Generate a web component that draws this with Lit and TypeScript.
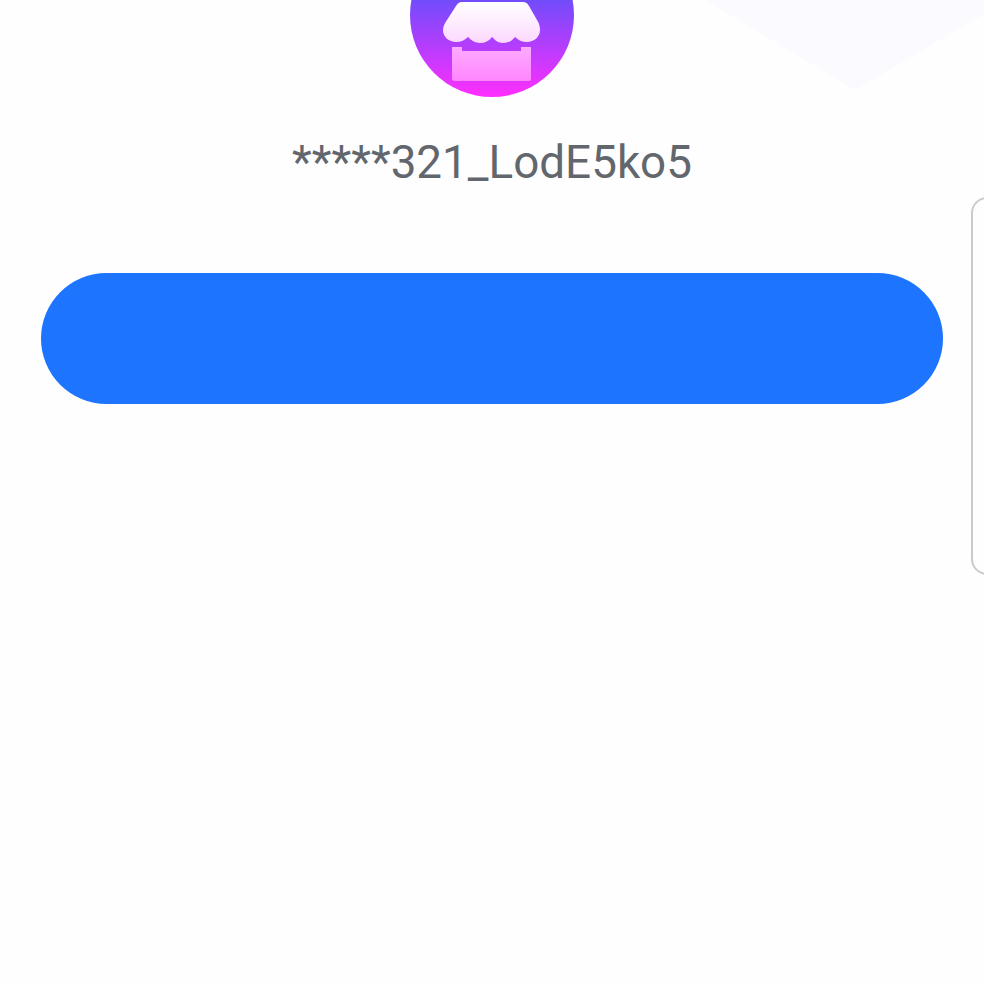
import { LitElement, html, css } from "lit";
import { customElement } from "lit/decorators.js";

@customElement("app-root")
export class AppRoot extends LitElement {
  static styles = css`
    :host {
      display: block;
      position: relative;
      width: 984px;
      height: 984px;
      overflow: hidden;
      background: #fefefe;
      font-family: Roboto, "Liberation Sans", sans-serif;
    }
    .backdrop {
      position: absolute;
      top: 0;
      right: 0;
      width: 284px;
      height: 92px;
    }
    .handle {
      position: absolute;
      left: 971px;
      top: 197px;
      width: 40px;
      height: 378px;
      box-sizing: border-box;
      border: 2px solid #cbcbcd;
      border-radius: 16px;
      background: #fefefe;
    }
    .content {
      position: relative;
      display: flex;
      flex-direction: column;
      align-items: center;
      padding: 0 41px;
    }
    .avatar {
      display: block;
      width: 164px;
      height: 164px;
      margin-top: -67px;
    }
    .name {
      margin-top: 39px;
      font-size: 45.8px;
      line-height: 54px;
      color: #62666d;
      white-space: nowrap;
    }
    .action {
      align-self: stretch;
      height: 131px;
      margin-top: 83px;
      padding: 0;
      border: 0;
      border-radius: 66px;
      background: #1c74ff;
    }
  `;

  render() {
    return html`
      <svg class="backdrop" viewBox="0 0 284 92" aria-hidden="true">
        <path d="M5 0 L155 90 L284 14 V0 Z" fill="#fbfbff" />
      </svg>
      <div class="handle"></div>
      <div class="content">
        <svg class="avatar" viewBox="0 0 164 164" aria-label="Shop">
          <defs>
            <linearGradient id="disc" x1="0" y1="0" x2="0" y2="1">
              <stop offset="0.38" stop-color="#6b4dfb" />
              <stop offset="1" stop-color="#ff2eff" />
            </linearGradient>
            <linearGradient id="awning" x1="0" y1="0" x2="0" y2="1">
              <stop offset="0" stop-color="#ffffff" />
              <stop offset="1" stop-color="#fcd8fe" />
            </linearGradient>
            <linearGradient id="base" x1="0" y1="0" x2="0" y2="1">
              <stop offset="0" stop-color="#fdaaff" />
              <stop offset="1" stop-color="#ff86ff" />
            </linearGradient>
          </defs>
          <circle cx="82" cy="82" r="82" fill="url(#disc)" />
          <path
            fill="url(#awning)"
            d="M52 69 H113 C116 69 117 70 119 73 L127 87 C129 90 130 93 130 97 C130 104 124 109 117 109
               C112 109 108 107 105 104 C102 108 98 110 93 110 C88 110 85 107 82 104 C79 108 75 110 70 110
               C65 110 61 107 58 104 C55 107 51 109 46 109 C39 109 33 104 33 97 C33 93 35 90 37 87 L46 73
               C48 70 49 69 52 69 Z"
          />
          <path
            fill="url(#base)"
            d="M42 114 H52 V118 H111 V114 H121 V146 C121 147 120 148 119 148 H44 C43 148 42 147 42 146 Z"
          />
        </svg>
        <div class="name">*****321_LodE5ko5</div>
        <button class="action"></button>
      </div>
    `;
  }
}
